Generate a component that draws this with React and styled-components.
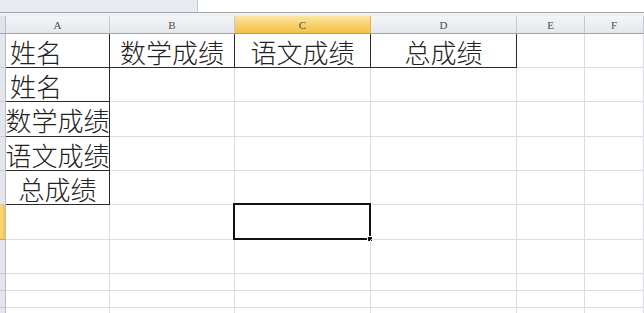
import React from "react";
import styled, { createGlobalStyle } from "styled-components";

const Global = createGlobalStyle`
  html, body { margin: 0; padding: 0; background: #fff; overflow: hidden; }
  * { box-sizing: border-box; }
`;

const Page = styled.div`
  width: 644px;
  height: 313px;
  display: flex;
  flex-direction: column;
  overflow: hidden;
  background: #fff;
  & > * { flex-shrink: 0; }
`;

const TopBar = styled.div`
  height: 13px;
  display: flex;
  border-bottom: 1px solid #a3a9b1;
`;

const NameBox = styled.div`
  width: 198px;
  background: #e7eaee;
  border-right: 1px solid #c5c9cf;
`;

const Strip = styled.div`
  height: 3px;
  background: #eef0f3;
`;

const COLS = [6, 104, 125, 136, 146, 68, 59];
const ROWS = [18, 34, 34, 35, 34, 34, 35, 34, 17, 17, 17];

const Grid = styled.div`
  display: grid;
  grid-template-columns: ${COLS.map((c) => c + "px").join(" ")};
  grid-template-rows: ${ROWS.map((r) => r + "px").join(" ")};
`;

const Corner = styled.div`
  background: #dfe3e8;
  border-right: 1px solid #b9bec6;
  border-bottom: 1px solid #9ea4ac;
`;

const ColHead = styled.div`
  display: flex;
  align-items: center;
  justify-content: center;
  padding-top: 1px;
  font-family: "Liberation Serif", "DejaVu Serif", serif;
  font-size: 11px;
  color: #4a4f56;
  background: ${(p) =>
    p.$active
      ? "linear-gradient(#fbe7a6, #f7d06a 55%, #f3c248)"
      : "linear-gradient(#f3f5f8, #e4e7ec)"};
  border-right: 1px solid ${(p) => (p.$active ? "#e0b24a" : "#c3c8cf")};
  border-bottom: 1px solid ${(p) => (p.$active ? "#c99a2e" : "#9ea4ac")};
`;

const RowHead = styled.div`
  background: ${(p) => (p.$active ? "linear-gradient(90deg, #fbd97a, #f4c452)" : "#e3e6eb")};
  border-right: 1px solid #b9bec6;
  border-bottom: 1px solid ${(p) => (p.$active ? "#d9a840" : "#c8ccd3")};
`;

const Cell = styled.div`
  position: relative;
  display: flex;
  align-items: center;
  justify-content: ${(p) => (p.$align === "left" ? "flex-start" : "center")};
  padding: 2px 0 0 ${(p) => (p.$align === "left" ? "4px" : "0")};
  white-space: nowrap;
  overflow: visible;
  font-family: "Noto Sans CJK SC", "Noto Sans", sans-serif;
  font-weight: 300;
  font-size: 26px;
  line-height: 1;
  color: #222;
  border-right: 1px solid ${(p) => (p.$boxed ? "#2a2a2a" : "#dadcdf")};
  border-bottom: 1px solid ${(p) => (p.$boxed ? "#2a2a2a" : "#dadcdf")};
`;

const Selection = styled.div`
  position: absolute;
  top: -2px;
  left: -2px;
  right: -1px;
  bottom: -1px;
  border: 2px solid #111;
  pointer-events: none;
`;

const FillHandle = styled.div`
  position: absolute;
  right: -4px;
  bottom: -4px;
  width: 6px;
  height: 6px;
  background: #111;
  border: 1px solid #fff;
`;

const letters = ["A", "B", "C", "D", "E", "F"];

const data = {
  "0-0": { text: "姓名", align: "left", boxed: true },
  "0-1": { text: "数学成绩", boxed: true },
  "0-2": { text: "语文成绩", boxed: true },
  "0-3": { text: "总成绩", boxed: true },
  "1-0": { text: "姓名", align: "left", boxed: true },
  "2-0": { text: "数学成绩", boxed: true },
  "3-0": { text: "语文成绩", boxed: true },
  "4-0": { text: "总成绩", boxed: true },
};

export default function App() {
  const bodyRows = ROWS.length - 1;
  return (
    <>
      <Global />
      <Page>
        <TopBar>
          <NameBox />
        </TopBar>
        <Strip />
        <Grid>
          <Corner />
          {letters.map((l) => (
            <ColHead key={l} $active={l === "C"}>
              {l}
            </ColHead>
          ))}
          {Array.from({ length: bodyRows }).map((_, r) => (
            <React.Fragment key={r}>
              <RowHead $active={r === 5} />
              {letters.map((_, c) => {
                const d = data[`${r}-${c}`];
                return (
                  <Cell key={c} $align={d?.align} $boxed={d?.boxed}>
                    {d?.text}
                    {r === 5 && c === 2 && (
                      <Selection>
                        <FillHandle />
                      </Selection>
                    )}
                  </Cell>
                );
              })}
            </React.Fragment>
          ))}
        </Grid>
      </Page>
    </>
  );
}
